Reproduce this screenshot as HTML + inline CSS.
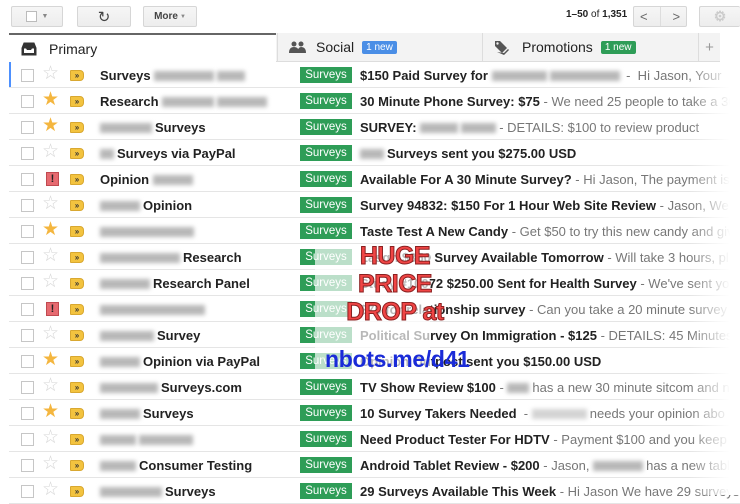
<!DOCTYPE html>
<html><head><meta charset="utf-8"><style>
*{margin:0;padding:0;box-sizing:border-box}
body{width:740px;height:495px;overflow:hidden;background:#fff;font-family:"Liberation Sans",Arial,sans-serif;position:relative;color:#222}
.btn{position:absolute;top:6px;height:21px;border:1px solid #d6d6d6;border-radius:2px;background:linear-gradient(#f6f6f6,#ededed);font-size:10px;font-weight:bold;color:#444;display:flex;align-items:center;justify-content:center}
.tabs{position:absolute;top:33px;left:9px;width:711px;height:29px;border-bottom:1px solid #ddd;background:#f3f3f3}
.tab{position:absolute;top:0;height:28px;font-size:14px;color:#222;display:flex;align-items:center}
.nb{font-size:10px;color:#fff;padding:1px 4px;border-radius:2px;margin-left:8px}
.row{position:absolute;left:9px;width:731px;height:26px;border-bottom:1px solid #e5e5e5;font-size:13px;white-space:nowrap}
.cb{position:absolute;left:12px;top:7px;width:13px;height:13px;border:1px solid #c6c6c6;background:#fff}
.st{position:absolute;left:33px;top:2px;font-size:19px;line-height:20px;color:#d6d6d6}
.st.on{color:#f4b63f}
.imp{position:absolute;left:61px;top:8px;width:14px;height:11px;background:#f3c33f;border:1px solid #d9a830;border-radius:1px 4px 4px 1px;font-size:8px;line-height:9px;font-weight:bold;color:#333;text-align:center}
.ex{position:absolute;left:37px;top:6px;width:13px;height:14px;background:#e66a70;border:1px solid #c04a50;color:#222;font-weight:bold;font-size:11px;line-height:12px;text-align:center}
.snd{position:absolute;left:91px;top:6px;font-weight:bold}
.bd{position:absolute;left:291px;top:5px;width:52px;height:16px;background:#2e9d57;color:#fff;font-size:11.5px;line-height:16px;text-align:center}
.sub{position:absolute;left:351px;top:6px}
.sub b{color:#222}.sub span.g{color:#777}
.bl{display:inline-block;height:10px;background:#b8b8b8;filter:blur(2px);vertical-align:-1px;margin-right:3px}
</style></head><body>
<div class="btn" style="left:11px;width:52px"><span style="width:11px;height:11px;border:1px solid #bbb;background:#fff;display:inline-block"></span><span style="font-size:7px;color:#888;margin-left:5px">▼</span></div>
<div class="btn" style="left:77px;width:54px;font-size:15px;font-weight:normal">↻</div>
<div class="btn" style="left:143px;width:54px">More <span style="font-size:6px;color:#888;margin-left:2px">▼</span></div>
<div style="position:absolute;left:566px;top:9px;font-size:10px;color:#222"><b>1–50</b> of <b>1,351</b></div>
<div class="btn" style="left:633px;width:54px;justify-content:space-around;font-weight:normal;font-size:13px;color:#666"><span>&lt;</span><span style="border-left:1px solid #ddd;height:19px"></span><span>&gt;</span></div>
<div class="btn" style="left:699px;width:41px;border-right:none;color:#ccc;font-size:14px">⚙</div>
<div class="tabs">
<div class="tab" style="left:0;width:267px;background:#fff;border-top:2px solid #666;height:29px;padding-left:12px"><svg width="16" height="14" viewBox="0 0 16 14"><path d="M1 6 L3 1 H13 L15 6 V13 H1Z" fill="#333" stroke="#333"/><path d="M3 6.5 H5 L6 8 H10 L11 6.5 H13 V11 H3Z" fill="#fff"/></svg><span style="margin-left:12px">Primary</span></div>
<div class="tab" style="left:268px;width:205px;border-left:1px solid #ddd;padding-left:11px"><svg width="17" height="12" viewBox="0 0 17 12"><circle cx="5" cy="3" r="2.5" fill="#555"/><circle cx="12" cy="3" r="2.5" fill="#555"/><path d="M0 12 Q0 6 5 6 Q10 6 10 12Z M8 12 Q9 6 12 6 Q17 6 17 12Z" fill="#555"/></svg><span style="margin-left:10px">Social</span><span class="nb" style="background:#4a8ee6">1 new</span></div>
<div class="tab" style="left:473px;width:216px;border-left:1px solid #ddd;padding-left:11px"><svg width="16" height="16" viewBox="0 0 16 16"><path d="M1 2 V7 L8 14 L13 9 L6 2Z" fill="#555"/><path d="M3 13 L10 16 L15 11 L14 10 L10 14Z" fill="#555"/><circle cx="3.5" cy="4.5" r="1.2" fill="#f3f3f3"/></svg><span style="margin-left:12px">Promotions</span><span class="nb" style="background:#2e9d57">1 new</span></div>
<div class="tab" style="left:689px;width:22px;border-left:1px solid #ddd;justify-content:center;color:#999;font-size:15px">+</div>
</div>

<div class="row" style="top:62px;box-shadow:inset 2px 0 0 #4d90fe"><div class="cb"></div><div class="st">☆</div><div class="imp">»</div><div class="snd">Surveys <span class="bl" style="width:60px"></span><span class="bl" style="width:28px"></span></div><div class="bd">Surveys</div><div class="sub"><b>$150 Paid Survey for <span class="bl" style="width:55px"></span><span class="bl" style="width:70px"></span></b><span class="g"> - &nbsp;Hi Jason, Your</span></div></div>
<div class="row" style="top:88px"><div class="cb"></div><div class="st on">★</div><div class="imp">»</div><div class="snd">Research <span class="bl" style="width:52px"></span><span class="bl" style="width:50px"></span></div><div class="bd">Surveys</div><div class="sub"><b>30 Minute Phone Survey: $75</b><span class="g"> - We need 25 people to take a 30</span></div></div>
<div class="row" style="top:114px"><div class="cb"></div><div class="st on">★</div><div class="imp">»</div><div class="snd"><span class="bl" style="width:52px"></span>Surveys</div><div class="bd">Surveys</div><div class="sub"><b>SURVEY: <span class="bl" style="width:38px"></span><span class="bl" style="width:35px"></span></b><span class="g">- DETAILS: $100 to review product</span></div></div>
<div class="row" style="top:140px"><div class="cb"></div><div class="st">☆</div><div class="imp">»</div><div class="snd"><span class="bl" style="width:14px"></span>Surveys via PayPal</div><div class="bd">Surveys</div><div class="sub"><b><span class="bl" style="width:24px"></span>Surveys sent you $275.00 USD</b></div></div>
<div class="row" style="top:166px"><div class="cb"></div><div class="ex">!</div><div class="imp">»</div><div class="snd">Opinion <span class="bl" style="width:40px"></span></div><div class="bd">Surveys</div><div class="sub"><b>Available For A 30 Minute Survey?</b><span class="g"> - Hi Jason, The payment is</span></div></div>
<div class="row" style="top:192px"><div class="cb"></div><div class="st">☆</div><div class="imp">»</div><div class="snd"><span class="bl" style="width:40px"></span>Opinion</div><div class="bd">Surveys</div><div class="sub"><b>Survey 94832: $150 For 1 Hour Web Site Review</b><span class="g"> - Jason, We</span></div></div>
<div class="row" style="top:218px"><div class="cb"></div><div class="st on">★</div><div class="imp">»</div><div class="snd"><span class="bl" style="width:94px"></span></div><div class="bd">Surveys</div><div class="sub"><b>Taste Test A New Candy</b><span class="g"> - Get $50 to try this new candy and give</span></div></div>
<div class="row" style="top:244px"><div class="cb"></div><div class="st">☆</div><div class="imp">»</div><div class="snd"><span class="bl" style="width:80px"></span>Research</div><div class="bd">Surveys</div><div class="sub"><b>Lasgn $350 Survey Available Tomorrow</b><span class="g"> - Will take 3 hours, pl</span></div></div>
<div class="row" style="top:270px"><div class="cb"></div><div class="st">☆</div><div class="imp">»</div><div class="snd"><span class="bl" style="width:50px"></span>Research Panel</div><div class="bd">Surveys</div><div class="sub"><b>Study #10072 $250.00 Sent for Health Survey</b><span class="g"> - We've sent yo</span></div></div>
<div class="row" style="top:296px"><div class="cb"></div><div class="ex">!</div><div class="imp">»</div><div class="snd"><span class="bl" style="width:105px"></span></div><div class="bd">Surveys</div><div class="sub"><b>$75 for relationship survey</b><span class="g"> - Can you take a 20 minute survey</span></div></div>
<div class="row" style="top:322px"><div class="cb"></div><div class="st">☆</div><div class="imp">»</div><div class="snd"><span class="bl" style="width:54px"></span>Survey</div><div class="bd">Surveys</div><div class="sub"><b>Political Survey On Immigration - $125</b><span class="g"> - DETAILS: 45 Minutes</span></div></div>
<div class="row" style="top:348px"><div class="cb"></div><div class="st on">★</div><div class="imp">»</div><div class="snd"><span class="bl" style="width:40px"></span>Opinion via PayPal</div><div class="bd">Surveys</div><div class="sub"><b>Opinion Outpost sent you $150.00 USD</b></div></div>
<div class="row" style="top:374px"><div class="cb"></div><div class="st">☆</div><div class="imp">»</div><div class="snd"><span class="bl" style="width:58px"></span>Surveys.com</div><div class="bd">Surveys</div><div class="sub"><b>TV Show Review $100</b><span class="g"> - <span class="bl" style="width:22px"></span>has a new 30 minute sitcom and ne</span></div></div>
<div class="row" style="top:400px"><div class="cb"></div><div class="st on">★</div><div class="imp">»</div><div class="snd"><span class="bl" style="width:40px"></span>Surveys</div><div class="bd">Surveys</div><div class="sub"><b>10 Survey Takers Needed</b><span class="g"> &nbsp;- <span class="bl" style="width:55px;background:#d4d4d4"></span>needs your opinion abo</span></div></div>
<div class="row" style="top:426px"><div class="cb"></div><div class="st">☆</div><div class="imp">»</div><div class="snd"><span class="bl" style="width:36px"></span><span class="bl" style="width:54px"></span></div><div class="bd">Surveys</div><div class="sub"><b>Need Product Tester For HDTV</b><span class="g"> - Payment $100 and you keep th</span></div></div>
<div class="row" style="top:452px"><div class="cb"></div><div class="st">☆</div><div class="imp">»</div><div class="snd"><span class="bl" style="width:36px"></span>Consumer Testing</div><div class="bd">Surveys</div><div class="sub"><b>Android Tablet Review - $200</b><span class="g"> - Jason, <span class="bl" style="width:50px"></span>has a new table</span></div></div>
<div class="row" style="top:478px"><div class="cb"></div><div class="st">☆</div><div class="imp">»</div><div class="snd"><span class="bl" style="width:62px"></span>Surveys</div><div class="bd">Surveys</div><div class="sub"><b>29 Surveys Available This Week</b><span class="g"> - Hi Jason We have 29 surveys</span></div></div>

<div style="position:absolute;left:315px;top:245px;width:115px;height:128px;background:rgba(255,255,255,0.68)"></div>
<div style="position:absolute;left:690px;top:62px;width:50px;height:433px;background:linear-gradient(90deg,rgba(255,255,255,0),#fff 80%)"></div>
<div style="position:absolute;left:330px;top:242px;width:130px;text-align:center;font-weight:bold;font-size:25px;line-height:28px;color:#f04545;-webkit-text-stroke:1px #8a2020;letter-spacing:-0.5px">HUGE<br>PRICE<br>DROP at</div>
<div style="position:absolute;left:325px;top:346px;font-weight:bold;font-size:23px;color:#1a2bd8;letter-spacing:-0.3px">nbots.me/d41</div>
</body></html>
